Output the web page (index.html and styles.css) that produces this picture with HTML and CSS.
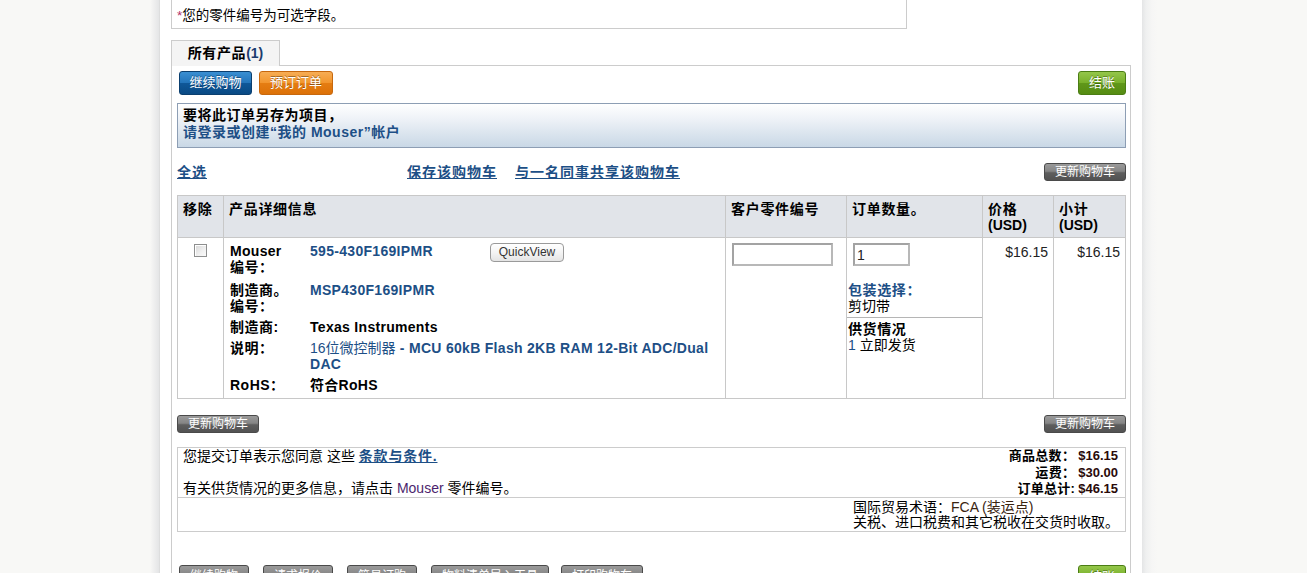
FILE: index.html
```html
<!DOCTYPE html>
<html lang="zh-CN">
<head>
<meta charset="utf-8">
<title>购物车</title>
<link rel="stylesheet" href="styles.css">
</head>
<body>
<div class="page">
  <div class="side-left"></div>
  <main class="content">
    <div class="note"><span class="star">*</span>您的零件编号为可选字段。</div>

    <div class="tabs"><div class="tab">所有产品<span class="count">(1)</span></div></div>

    <div class="panel">
      <div class="toolbar">
        <div class="btn-group">
          <button class="btn btn-blue">继续购物</button>
          <button class="btn btn-orange">预订订单</button>
        </div>
        <button class="btn btn-green">结账</button>
      </div>

      <div class="login-box">
        <div class="login-title">要将此订单另存为项目，</div>
        <a class="login-link">请登录或创建“我的 Mouser”帐户</a>
      </div>

      <div class="links-row">
        <a class="link">全选</a>
        <a class="link save">保存该购物车</a>
        <a class="link">与一名同事共享该购物车</a>
        <span class="spacer"></span>
        <button class="btn-gray">更新购物车</button>
      </div>

      <table class="cart">
        <colgroup>
          <col class="c-rm"><col class="c-prod"><col class="c-cust"><col class="c-qty"><col class="c-price"><col class="c-sub">
        </colgroup>
        <thead>
          <tr>
            <th>移除</th>
            <th>产品详细信息</th>
            <th>客户零件编号</th>
            <th>订单数量。</th>
            <th>价格<br><span class="usd">(USD)</span></th>
            <th>小计<br><span class="usd">(USD)</span></th>
          </tr>
        </thead>
        <tbody>
          <tr>
            <td class="td-rm"><span class="checkbox"></span></td>
            <td class="td-prod">
              <div class="detail">
                <div class="dl r1"><span class="lat">Mouser</span><br>编号：</div>
                <div class="dv r1"><a class="pn">595-430F169IPMR</a></div>
                <div class="dq r1"><button class="qv">QuickView</button></div>
                <div class="dl">制造商。<br>编号：</div>
                <div class="dv span2"><a class="pn">MSP430F169IPMR</a></div>
                <div class="dl">制造商:</div>
                <div class="dv span2 blk">Texas Instruments</div>
                <div class="dl">说明：</div>
                <div class="dv span2 desc"><span class="cn">16位微控制器</span> - MCU 60kB Flash 2KB RAM 12-Bit ADC/Dual DAC</div>
                <div class="dl">RoHS：</div>
                <div class="dv span2 blk">符合RoHS</div>
              </div>
            </td>
            <td class="td-cust"><input class="field field-cust" type="text"></td>
            <td class="td-qty">
              <div class="qty-top"><input class="field field-qty" type="text" value="1"></div>
              <div class="pack">
                <div class="pack-title">包装选择：</div>
                <div>剪切带</div>
              </div>
              <div class="avail">
                <div class="avail-title">供货情况</div>
                <div><span class="num">1</span> 立即发货</div>
              </div>
            </td>
            <td class="td-price">$16.15</td>
            <td class="td-price">$16.15</td>
          </tr>
        </tbody>
      </table>

      <div class="update-row">
        <button class="btn-gray">更新购物车</button>
        <button class="btn-gray">更新购物车</button>
      </div>

      <div class="summary">
        <div class="sum-top">
          <div class="sum-left">
            <p>您提交订单表示您同意 这些 <a class="link terms">条款与条件.</a></p>
            <p class="more">有关供货情况的更多信息，请点击 <span class="mouser">Mouser</span> 零件编号。</p>
          </div>
          <div class="sum-right">
            <span class="k">商品总数：</span><span class="v">$16.15</span>
            <span class="k">运费：</span><span class="v">$30.00</span>
            <span class="k">订单总计:</span><span class="v">$46.15</span>
          </div>
        </div>
        <div class="sum-bottom">
          <div></div>
          <div class="terms-info">国际贸易术语：<span class="fca">FCA (装运点)</span><br>关税、进口税费和其它税收在交货时收取。</div>
        </div>
      </div>

      <div class="bottom-bar">
        <div class="btn-row">
          <button class="btn-gray big">继续购物</button>
          <button class="btn-gray big">请求报价</button>
          <button class="btn-gray big">简易订购</button>
          <button class="btn-gray big">物料清单导入工具</button>
          <button class="btn-gray big last">打印购物车</button>
        </div>
        <button class="btn btn-green">结账</button>
      </div>
    </div>
  </main>
  <div class="side-right"></div>
  <div class="edge"></div>
</div>
</body>
</html>
```

FILE: styles.css
```css
* { box-sizing: border-box; }
html, body { margin: 0; padding: 0; }
body {
  background: #f8f8f6;
  font-family: "Liberation Sans", "Noto Sans CJK SC", sans-serif;
  font-size: 14px;
  line-height: 16px;
  color: #000;
}
p { margin: 0; }
a { cursor: pointer; }
button {
  font-family: "Liberation Sans", "Noto Sans CJK SC", sans-serif;
  cursor: pointer;
  white-space: nowrap;
  text-align: center;
}

.page { display: flex; min-height: 573px; }
.side-left {
  flex: 0 0 160px;
  background: linear-gradient(to right, #f8f8f6 0, #f8f8f6 150px, #f1f1f1 153px, #e4e5e6 159px, #d6d6d6 160px);
}
.content {
  flex: 0 0 981px;
  background: #fff;
  padding: 0 11px 0 11px;
}
.side-right {
  flex: 0 0 165px;
  background: linear-gradient(to right, #e4e5e6 0, #eff0f0 4px, #f6f6f5 10px, #f8f8f6 16px);
}
.edge { flex: 1; background: #fff; }

/* top note */
.note {
  width: 736px;
  border: 1px solid #ccc;
  border-top: 0;
  padding: 8px 5px 4px;
  font-size: 13.5px;
  line-height: 16px;
}
.star { color: #b0306a; }

/* tabs */
.tabs { margin-top: 11px; display: flex; }
.tab {
  width: 109px;
  height: 26px;
  border: 1px solid #ccc;
  border-bottom: 0;
  background: #f4f4f4;
  text-align: center;
  font-weight: bold;
  font-size: 14px;
  line-height: 24px;
  letter-spacing: 0.6px;
  margin-bottom: -1px;
  position: relative;
  z-index: 1;
}
.count { color: #1b3c6e; letter-spacing: 0; }

/* panel */
.panel {
  border: 1px solid #ccc;
  border-bottom: 0;
  padding: 5px 4px 0 5px;
}
.toolbar {
  display: flex;
  justify-content: space-between;
  align-items: flex-start;
  padding-left: 2px;
}
.btn-group { display: flex; gap: 7px; }
.btn {
  height: 24px;
  padding: 0;
  border-radius: 3px;
  color: #fff;
  font-size: 13px;
  line-height: 22px;
  text-shadow: 0 -1px 0 rgba(0,0,0,0.35);
  border: 1px solid;
}
.btn-blue {
  width: 73px;
  border-color: #0b3f6f;
  background: linear-gradient(to bottom, #3a8fd2 0, #2475bb 48%, #0f5798 52%, #0a4a84 100%);
}
.btn-orange {
  width: 74px;
  border-color: #c7680e;
  background: linear-gradient(to bottom, #f7ad55 0, #f2962e 48%, #e57d12 52%, #dc7108 100%);
}
.btn-green {
  width: 48px;
  border-color: #4b7d14;
  background: linear-gradient(to bottom, #94c64a 0, #79b12c 48%, #60971a 52%, #558c12 100%);
}

/* login box */
.login-box {
  margin-top: 8px;
  border: 1px solid #8d9eb4;
  background: linear-gradient(to bottom, #ffffff 0, #eef2f7 35%, #c9d8e6 100%);
  padding: 3px 5px 6px;
  font-weight: bold;
  font-size: 14px;
  line-height: 17px;
  letter-spacing: 0.5px;
}
.login-link { display: block; color: #1d4f86; }

/* link row */
.links-row {
  margin-top: 15px;
  height: 18px;
  display: flex;
  align-items: center;
}
.link {
  color: #1d4f86;
  font-weight: bold;
  text-decoration: underline;
  font-size: 14px;
  letter-spacing: 1px;
}
.links-row .link:first-child { width: 230px; }
.links-row .save { margin-right: 18px; }
.spacer { flex: 1; }
.btn-gray {
  height: 18px;
  width: 82px;
  padding: 0;
  border: 1px solid #4a4a4a;
  border-radius: 3px;
  color: #fff;
  font-size: 12px;
  line-height: 16px;
  background: linear-gradient(to bottom, #9a9a9a 0, #858585 45%, #5e5e5e 55%, #525252 100%);
}
.btn-gray.big {
  width: auto;
  height: 22px;
  padding: 0 10px;
  line-height: 20px;
}
.btn-gray.last { margin-left: -2px; }

/* cart table */
.cart {
  margin-top: 14px;
  width: 948px;
  table-layout: fixed;
  border-collapse: collapse;
  border: 1px solid #c8c8c8;
}
.c-rm { width: 46px; }
.c-prod { width: 502px; }
.c-cust { width: 121px; }
.c-qty { width: 136px; }
.c-price { width: 71px; }
.c-sub { width: 72px; }
.cart th, .cart td {
  border: 1px solid #c8c8c8;
  vertical-align: top;
  text-align: left;
}
.cart th {
  background: #e1e4e9;
  height: 42px;
  padding: 5px 5px 0 5px;
  font-size: 14px;
  font-weight: bold;
  letter-spacing: 0.7px;
  line-height: 16px;
}
.usd { letter-spacing: 0; font-size: 14px; }
.cart td { padding: 5px 6px 5px 6px; }
.cart td.td-rm { text-align: center; padding-top: 6px; }
.checkbox {
  display: inline-block;
  width: 13px;
  height: 13px;
  border: 1px solid #8e8f8f;
  background: linear-gradient(135deg, #d6d6d6 0, #f0f0f0 60%, #fafafa 100%);
  box-shadow: inset 1px 1px 0 #fff;
}

.detail {
  display: grid;
  grid-template-columns: 80px 180px 1fr;
  row-gap: 5px;
  line-height: 16px;
}
.dl { font-weight: bold; letter-spacing: 0.5px; }
.dl .lat { letter-spacing: 0.3px; }
.r1 { padding-bottom: 2px; }
.dv { font-weight: bold; color: #1d4f86; letter-spacing: 0.3px; }
.dv .pn { color: #1d4f86; }
.span2 { grid-column: 2 / 4; }
.blk { color: #000; }
.cn { font-weight: normal; letter-spacing: 0; }
.qv {
  width: 74px;
  height: 19px;
  padding: 0;
  border: 1px solid #9a9a9a;
  border-radius: 4px;
  background: linear-gradient(to bottom, #ffffff 0, #f4f4f4 50%, #e4e4e4 100%);
  color: #333;
  font-size: 12px;
  line-height: 17px;
}

.field {
  height: 23px;
  border: 2px solid #a3a3a3;
  border-right-color: #b8b8b8;
  border-bottom-color: #b8b8b8;
  font-family: "Liberation Sans", sans-serif;
  font-size: 14px;
  padding: 0 2px;
  color: #222;
  outline: none;
  display: block;
}
.field-cust { width: 101px; }
.field-qty { width: 57px; }

.cart td.td-qty { padding: 0; }
.qty-top { padding: 5px 0 0 6px; }
.pack { margin-top: 16px; padding-left: 1px; }
.pack-title { color: #1d4f86; font-weight: bold; letter-spacing: 0.6px; }
.avail {
  margin-top: 3px;
  border-top: 1px solid #b5b5b5;
  padding: 3px 0 0 1px;
}
.avail-title { font-weight: bold; letter-spacing: 0.6px; }
.num { color: #1d4f86; }
.cart td.td-price { text-align: right; padding-right: 5px; padding-top: 6px; color: #222; }

/* update row */
.update-row {
  margin-top: 16px;
  display: flex;
  justify-content: space-between;
}

/* summary */
.summary {
  margin-top: 14px;
  border: 1px solid #ccc;
}
.sum-top {
  display: flex;
  justify-content: space-between;
  height: 49px;
}
.sum-left { padding-left: 5px; }
.sum-left .more { margin-top: 16px; }
.terms { letter-spacing: 0.8px; }
.mouser { color: #4c1f6e; }
.sum-right {
  display: grid;
  grid-template-columns: auto auto;
  column-gap: 3px;
  align-content: start;
  padding-right: 7px;
  font-weight: bold;
  font-size: 13px;
  line-height: 16.5px;
}
.sum-right .k { text-align: right; letter-spacing: 0.3px; }
.sum-right .v { color: #2a0a0a; }
.sum-bottom {
  display: grid;
  grid-template-columns: 675px 1fr;
  border-top: 1px solid #ccc;
  padding-top: 2px;
  line-height: 15px;
  height: 34px;
}
.fca { color: #3a2410; }

/* bottom bar */
.bottom-bar {
  margin-top: 33px;
  display: flex;
  justify-content: space-between;
  align-items: flex-start;
  padding-left: 2px;
}
.btn-row { display: flex; gap: 14px; }
```
